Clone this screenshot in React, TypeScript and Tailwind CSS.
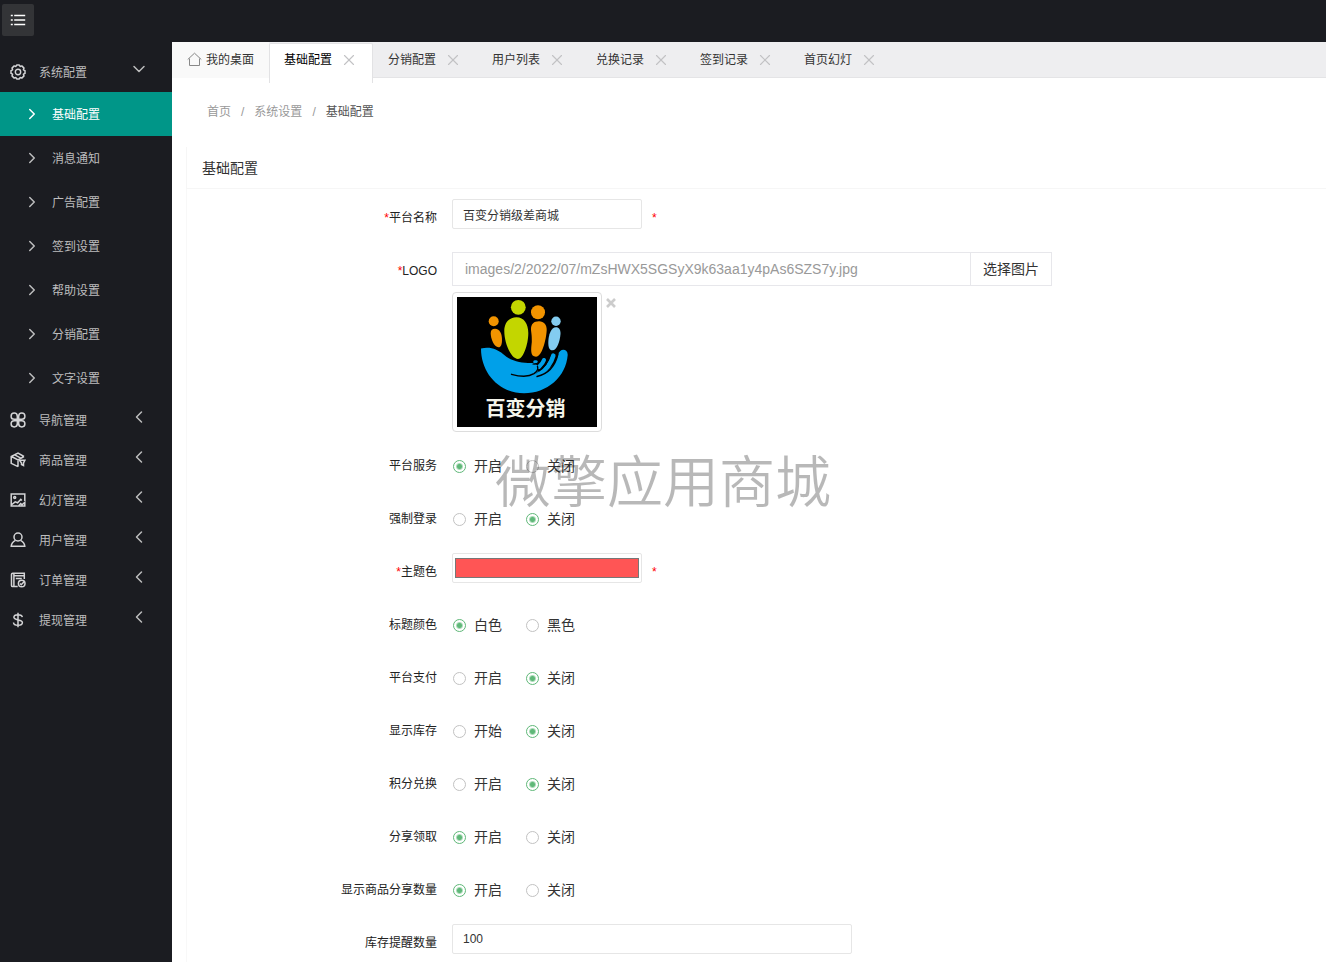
import { useState } from "react";
import type { ReactNode } from "react";
import { ChevronDown, ChevronLeft, ChevronRight, X } from "lucide-react";

type IconProps = { children: ReactNode; className?: string };

function Icon({ children, className = "size-4 text-[#d4d4d6]" }: IconProps) {
  return (
    <svg
      viewBox="0 0 16 16"
      fill="none"
      stroke="currentColor"
      strokeWidth="1.5"
      aria-hidden="true"
      className={`shrink-0 ${className}`}
    >
      {children}
    </svg>
  );
}

const gearIcon = (
  <Icon>
    <path
      d="M6.700 1h2.600l.8 1.500 1.700-.6 2.200 2.200-.6 1.700 1.600.8v2.800l-1.600.8.6 1.700-2.200 2.200-1.700-.6-.8 1.500H6.700l-.8-1.500-1.700.6L2 11.900l.6-1.700L1 9.400V6.600l1.600-.8L2 4.100l2.200-2.200 1.700.6z"
      strokeLinejoin="round"
    />
    <circle cx="8" cy="8" r="2.700" strokeWidth="1.400" />
  </Icon>
);

const navIcon = (
  <Icon>
    <path d="M7.300 7.300H4.200A3.100 3.100 0 1 1 7.300 4.200zM8.700 7.300V4.200a3.100 3.100 0 1 1 3.100 3.100zM7.300 8.700v3.100a3.100 3.100 0 1 1-3.100-3.100zM8.700 8.700h3.100a3.100 3.100 0 1 1-3.100 3.100z" />
  </Icon>
);

const goodsIcon = (
  <Icon>
    <path d="M8 14.700 1.200 11.400V4.500L8 1.200l6 3.300M1.500 4.500 8 7.900l6-3.400M8 7.900v6.800M4.700 2.900l5.600 3" />
    <path d="M9.500 8.200h5.400L13.500 11v2.500l-2-1V11z" />
  </Icon>
);

const slideIcon = (
  <Icon>
    <path d="M14.800 9V2H1.200v12h6.500M1.200 13l4-3.200 2.400 1 3.200-3.500 1 1.200M8.500 14l2.200-2.400 1.300 1.200 2.800-2.400V14z" />
    <circle cx="4.700" cy="5.400" r="1" />
  </Icon>
);

const userIcon = (
  <Icon>
    <circle cx="8" cy="5" r="4" />
    <path d="M5.500 8.300C3 9.600 1.400 11.500 1.200 14.300h13.600c-.2-2.800-1.800-4.700-4.300-6" />
  </Icon>
);

const orderIcon = (
  <Icon>
    <path d="M14.300 7V1.200H2.700A1.200 1.200 0 0 0 1.500 2.400v11c0 .7.5 1.200 1.200 1.200h5M3.900 1.200v13.400M3.800 3.800h10.500M5.800 6.500h6" />
    <circle cx="11.700" cy="11.500" r="3.300" />
    <path d="m10 11.500 1.200 1.200 3.200-3.300" />
  </Icon>
);

const cashIcon = (
  <Icon>
    <path d="M8 .8v14.400M12.300 5.200C12.100 3.600 10.600 2.700 8 2.700S3.900 3.700 3.900 5.300c0 3.500 8.500 1.700 8.500 5.200 0 1.800-1.700 2.800-4.400 2.800s-4.400-1-4.500-2.800" />
  </Icon>
);

const subMenus = [
  "基础配置",
  "消息通知",
  "广告配置",
  "签到设置",
  "帮助设置",
  "分销配置",
  "文字设置",
];

const menus = [
  { name: "导航管理", icon: navIcon },
  { name: "商品管理", icon: goodsIcon },
  { name: "幻灯管理", icon: slideIcon },
  { name: "用户管理", icon: userIcon },
  { name: "订单管理", icon: orderIcon },
  { name: "提现管理", icon: cashIcon },
];

const tabs = [
  "基础配置",
  "分销配置",
  "用户列表",
  "兑换记录",
  "签到记录",
  "首页幻灯",
];

function Sidebar() {
  return (
    <nav className="w-[172px] shrink-0 overflow-hidden bg-[#1b1c21] pt-[10px] text-xs text-[#bdbdbe]">
      <a href="#system" className="flex h-10 items-center pr-[23px] pl-[10px]">
        {gearIcon}
        <span className="ml-[13px] flex-1 pt-[2px]">系统配置</span>
        <ChevronDown size={20} strokeWidth={1.8} className="mb-[6px]" />
      </a>
      <ul>
        {subMenus.map((name, i) => (
          <li key={name}>
            <a
              href={`#sub-${i}`}
              className={`flex h-11 items-center gap-[11px] pl-[23px] ${
                i === 0 ? "bg-[#009688] text-white" : ""
              }`}
            >
              <ChevronRight size={18} strokeWidth={2} />
              <span className="pt-[2px]">{name}</span>
            </a>
          </li>
        ))}
      </ul>
      {menus.map((menu) => (
        <a
          key={menu.name}
          href={`#${menu.name}`}
          className="flex h-10 items-center pr-[23px] pl-[10px]"
        >
          {menu.icon}
          <span className="ml-[13px] flex-1 pt-[2px]">{menu.name}</span>
          <ChevronLeft size={20} strokeWidth={1.8} className="mb-[6px]" />
        </a>
      ))}
    </nav>
  );
}

function TabBar() {
  return (
    <div className="flex h-9 shrink-0 border-b border-[#e4e4e6] bg-[#eeeef0] text-xs text-[#333]">
      <a
        href="#home"
        className="flex h-9 w-[97px] items-center gap-1 bg-[#f9f9f9] pl-[15px]"
      >
        <svg
          viewBox="0 0 15 15"
          fill="none"
          stroke="#888"
          aria-hidden="true"
          className="mb-[2px] size-[15px]"
        >
          <path d="m.7 7.500 6.800-6.300 6.800 6.300M2.500 6.500v7h10v-7" />
        </svg>
        我的桌面
      </a>
      {tabs.map((name, i) => (
        <div
          key={name}
          className={`flex w-[104px] items-center gap-2 ${
            i === 0
              ? "z-10 mt-px h-10 rounded-t-xs border border-b-0 border-[#e2e2e4] bg-white pb-2 pl-[14px] text-black"
              : "h-9 pl-[15px]"
          }`}
        >
          <a href={`#tab-${i}`}>{name}</a>
          <button type="button" aria-label={`关闭${name}`}>
            <X size={18} strokeWidth={1.500} className="text-[#c2c2c4]" />
          </button>
        </div>
      ))}
    </div>
  );
}

type RowProps = {
  label: string;
  htmlFor?: string;
  required?: boolean;
  children: ReactNode;
};

function Row({ label, htmlFor, required, children }: RowProps) {
  return (
    <div className="flex min-h-[38px] items-start">
      <label
        htmlFor={htmlFor}
        className="w-[265px] shrink-0 pt-[9px] pr-[15px] text-right text-xs leading-5 text-[#222]"
      >
        {required ? <span className="text-[#f00]">*</span> : null}
        {label}
      </label>
      {children}
    </div>
  );
}

type RadioRowProps = {
  label: string;
  name: string;
  options: string[];
  initial: number;
};

function RadioRow({ label, name, options, initial }: RadioRowProps) {
  const [value, setValue] = useState(initial);

  return (
    <fieldset className="flex h-[38px] items-start">
      <legend className="float-left w-[265px] shrink-0 pt-[9px] pr-[15px] text-right text-xs leading-5 text-[#222]">
        {label}
      </legend>
      <div className="flex gap-6 pt-[9px] pl-px">
        {options.map((option, i) => (
          <label
            key={option}
            className="flex items-center gap-2 text-sm leading-5 text-[#333]"
          >
            <input
              type="radio"
              name={name}
              checked={value === i}
              onChange={() => setValue(i)}
              className="size-[13px] appearance-none rounded-full border border-[#c2c2c2] checked:border-[#5fb878] checked:bg-[radial-gradient(circle,#5fb878_2px,#fff_4px)]"
            />
            {option}
          </label>
        ))}
      </div>
    </fieldset>
  );
}

function LogoPicture() {
  return (
    <svg
      viewBox="0 0 140 130"
      role="img"
      aria-label="百变分销"
      className="h-[130px] w-[140px] bg-black"
    >
      <g fill="#c3d600">
        <circle cx="61.300" cy="10.300" r="7.400" />
        <path d="M59.500 20.300c7.500 0 11.800 6.700 11.800 15.700 0 12-5.300 26-10.300 26-7 0-13.700-16-13.700-28 0-8 4.700-13.700 12.200-13.700z" />
      </g>
      <g fill="#f29400">
        <circle cx="81" cy="15.200" r="7" />
        <path d="M82 24.300c5 0 7.900 3.700 7.700 8.700C89.200 43 85 59.700 79 59.700c-6 0-5-7.700-4.200-14.700.3-7-.8-10-.8-13 0-5 3-7.700 8-7.700z" />
        <circle cx="36.700" cy="24.300" r="5" />
        <path d="M38 31.700c5 0 7 5.300 7 11.300 0 4-1 7.300-3.500 7.300-4.500-.3-7.800-8.300-7.800-14.300 0-3 1.800-4.300 4.300-4.300z" />
      </g>
      <g fill="#83ccf0">
        <circle cx="99" cy="24.300" r="4.700" />
        <path d="M99 30.300c3 0 4.700 2.700 4.500 6.700-.5 7-3.500 16.300-8 16.300-3.500 0-4.200-3.300-4.200-8.300.2-7 2.700-14.700 7.700-14.700z" />
      </g>
      <path
        fill="#00a0e9"
        d="M24 51.500c10-2 16 1 22 5.500 8 7.500 18 9 28 9 7 0 9 5 5.500 10.500l4.500 1c11-5 16-14 17-20 2-7 10-6 9.700.5C109 80 90 96.300 67 96.300 42 96.300 24 76 24 51.500z"
      />
      <g stroke="#00a0e9" strokeLinecap="round" fill="none">
        <path d="M96.300 58.700C94 67 89 73 82 77" strokeWidth="4.600" />
        <path d="M87 63c-1 3-3 5-5 7" strokeWidth="4" />
        <path d="M77.700 64.800h1.600" strokeWidth="3" />
      </g>
      <g stroke="#000" strokeLinecap="round" fill="none">
        <path d="M54.500 77.300c9 2.500 18 2.200 22.500-.6 3-2 4.500-4.500 3.500-7.200" strokeWidth="1.400" />
        <path d="M80 79.500C91 77 98 70 101 57" strokeWidth="1.300" />
        <path d="M82 74c6-4 9-9 11-16" strokeWidth="1.300" />
        <path d="M76 67c3 .5 6-1 7.500-4.500" strokeWidth="1.200" />
      </g>
      <text
        x="28.500"
        y="119"
        fill="#f4f4ea"
        fontSize="20"
        fontWeight="700"
        fontFamily="'Noto Sans CJK SC', sans-serif"
      >
        百变分销
      </text>
    </svg>
  );
}

const radioRowsBefore = [
  { label: "平台服务", name: "service", options: ["开启", "关闭"], initial: 0 },
  { label: "强制登录", name: "login", options: ["开启", "关闭"], initial: 1 },
];

const radioRowsAfter = [
  { label: "标题颜色", name: "title", options: ["白色", "黑色"], initial: 0 },
  { label: "平台支付", name: "pay", options: ["开启", "关闭"], initial: 1 },
  { label: "显示库存", name: "stock", options: ["开始", "关闭"], initial: 1 },
  { label: "积分兑换", name: "points", options: ["开启", "关闭"], initial: 1 },
  { label: "分享领取", name: "share", options: ["开启", "关闭"], initial: 0 },
  {
    label: "显示商品分享数量",
    name: "shareCount",
    options: ["开启", "关闭"],
    initial: 0,
  },
];

function SettingsForm() {
  return (
    <form className="flex flex-col gap-[15px] border-l border-[#f8f8f8] pt-[10px]">
      <Row label="平台名称" htmlFor="platform-name" required>
        <input
          id="platform-name"
          defaultValue="百变分销级差商城"
          className="h-[30px] w-[190px] rounded-xs border border-[#e6e6e6] px-[10px] text-xs text-[#333]"
        />
        <span className="ml-[10px] pt-[9px] text-xs leading-5 text-[#f00]">*</span>
      </Row>

      <Row label="LOGO" htmlFor="logo-path" required>
        <div>
          <div className="flex h-[34px] w-[600px]">
            <input
              id="logo-path"
              defaultValue="images/2/2022/07/mZsHWX5SGSyX9k63aa1y4pAs6SZS7y.jpg"
              className="min-w-0 flex-1 border border-[#e7e7eb] px-3 text-sm text-[#999]"
            />
            <button
              type="button"
              className="w-[81px] border border-l-0 border-[#e7e7eb] text-sm text-[#333]"
            >
              选择图片
            </button>
          </div>
          <div className="mt-[6px] flex items-start gap-1">
            <div className="h-[140px] w-[150px] rounded-sm border border-[#ddd] p-1">
              <LogoPicture />
            </div>
            <button type="button" aria-label="删除图片" className="pt-[6px]">
              <svg
                viewBox="0 0 10 10"
                stroke="#ccc"
                strokeWidth="2.600"
                className="size-[10px]"
              >
                <path d="m1 1 8 8M9 1 1 9" />
              </svg>
            </button>
          </div>
        </div>
      </Row>

      {radioRowsBefore.map((row) => (
        <RadioRow key={row.name} {...row} />
      ))}

      <Row label="主题色" htmlFor="theme-color" required>
        <input
          id="theme-color"
          type="color"
          defaultValue="#ff5555"
          className="h-[30px] w-[190px] rounded-xs border border-[#e6e6e6] bg-white p-0"
        />
        <span className="ml-[10px] pt-[9px] text-xs leading-5 text-[#f00]">*</span>
      </Row>

      {radioRowsAfter.map((row) => (
        <RadioRow key={row.name} {...row} />
      ))}

      <Row label="库存提醒数量" htmlFor="stock-alert">
        <input
          id="stock-alert"
          defaultValue="100"
          className="h-[30px] w-[400px] rounded-xs border border-[#e6e6e6] px-[10px] text-xs text-[#333]"
        />
      </Row>
    </form>
  );
}

export default function App() {
  return (
    <div className="flex h-screen flex-col bg-white font-['Liberation_Sans','Noto_Sans_CJK_SC',sans-serif]">
      <header className="h-[42px] shrink-0 bg-[#1b1c21] px-[2px] pt-1">
        <button
          type="button"
          aria-label="菜单"
          className="flex size-8 items-center justify-center rounded-xs bg-[#333437]"
        >
          <Icon className="size-4 text-white">
            <path d="M.8 3.500h2M4.200 3.500h11M.8 8h2M4.200 8h11M.8 12.500h2M4.200 12.500h11" />
          </Icon>
        </button>
      </header>

      <div className="flex min-h-0 flex-1">
        <Sidebar />
        <div className="flex min-w-0 flex-1 flex-col">
          <TabBar />
          <main className="min-h-0 flex-1 overflow-y-auto pl-[14px]">
            <div className="flex h-[69px] items-center gap-[10px] pb-[2px] pl-[21px] text-xs text-[#999]">
              <a href="#index">首页</a>
              <span>/</span>
              <a href="#settings">系统设置</a>
              <span>/</span>
              <span className="text-[#555]">基础配置</span>
            </div>
            <h1 className="h-[42px] border-b border-l border-[#f6f6f6] pl-[15px] text-sm leading-[42px] text-[#333]">
              基础配置
            </h1>
            <SettingsForm />
          </main>
        </div>
      </div>

      <div className="pointer-events-none fixed inset-0 z-20 flex items-center justify-center pt-1 text-[56px] font-[350] text-black/28">
        微擎应用商城
      </div>
    </div>
  );
}
